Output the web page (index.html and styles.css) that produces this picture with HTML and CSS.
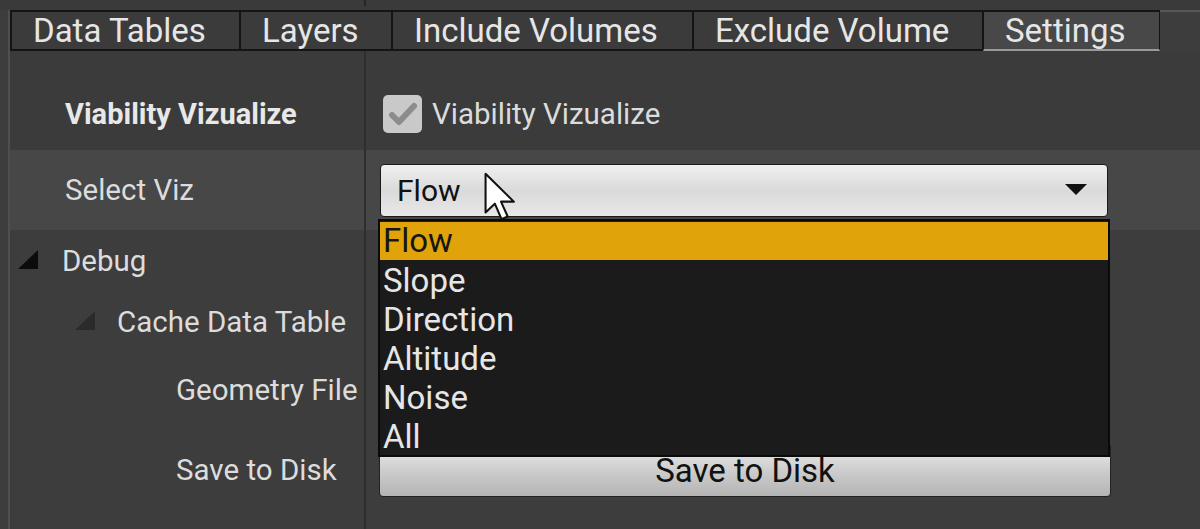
FILE: index.html
```html
<!DOCTYPE html>
<html lang="en">
  <head>
    <meta charset="UTF-8" />
    <meta name="viewport" content="width=device-width, initial-scale=1.0" />
    <title>Settings</title>
    <link rel="stylesheet" href="styles.css">
  </head>
  <body>
    <div class="top-strip"><span class="tick"></span></div>
    <div class="panel">
      <div class="tabs">
        <div class="tab" style="width: 230px">Data Tables</div>
        <div class="tab" style="width: 152px">Layers</div>
        <div class="tab" style="width: 301px">Include Volumes</div>
        <div class="tab" style="width: 290px">Exclude Volume</div>
        <div class="tab active" style="width: 177px">Settings</div>
        <div class="tab-rest"></div>
      </div>

      <div class="details">
        <div class="row first">
          <div class="name bold">Viability Vizualize</div>
          <div class="value">
            <span class="checkbox">
              <svg width="30" height="26" viewBox="0 0 30 26">
                <path d="M4 14 L11 21 L26 5" fill="none" stroke="#8c8c8c" stroke-width="6" stroke-linejoin="round" stroke-linecap="round" />
              </svg>
            </span>
            <span class="check-label">Viability Vizualize</span>
          </div>
        </div>

        <div class="row hover">
          <div class="name">Select Viz</div>
          <div class="value">
            <div class="combo">
              <span>Flow</span>
              <svg class="combo-arrow" width="22" height="12" viewBox="0 0 22 12">
                <path d="M0 0 L22 0 L11 11 Z" fill="#111" />
              </svg>
            </div>
          </div>
        </div>

        <div class="row group">
          <div class="name">
            <span class="arrow"></span>
            <span>Debug</span>
          </div>
          <div class="value"></div>
        </div>

        <div class="row sub">
          <div class="name">
            <span class="arrow dim"></span>
            <span>Cache Data Table</span>
          </div>
          <div class="value"></div>
        </div>

        <div class="row leaf geo">
          <div class="name">Geometry File</div>
          <div class="value"></div>
        </div>

        <div class="row leaf save">
          <div class="name">Save to Disk</div>
          <div class="value">
            <button class="save-btn">Save to Disk</button>
          </div>
        </div>
      </div>
    </div>

    <!-- open combo list -->
    <div class="dropdown">
      <div class="option selected">Flow</div>
      <div class="option">Slope</div>
      <div class="option">Direction</div>
      <div class="option">Altitude</div>
      <div class="option">Noise</div>
      <div class="option">All</div>
    </div>

    <svg class="cursor" width="36" height="52" viewBox="0 0 14 20">
      <path d="M1 1 L1 16 L4.6 12.6 L7.2 18.6 L9.6 17.6 L7 11.8 L12 11.8 Z" fill="#fff" stroke="#111" stroke-width="0.8" stroke-linejoin="round" />
    </svg>
  </body>
</html>
```

FILE: styles.css
```css
body {
  margin: 0;
  height: 529px;
  overflow: hidden;
  position: relative;
  font-family: Roboto, "Noto Sans", sans-serif;
  background-color: #3d3d3d;
  color: #e2e2e2;
}

.top-strip {
  height: 10px;
  background: #3a3a3a;
  position: relative;
}

.tick {
  position: absolute;
  left: 364px;
  top: 0;
  width: 2px;
  height: 6px;
  background: #262626;
}

.panel {
  margin-left: 8px;
  border-left: 2px solid #4f4f4f;
  height: 519px;
}

/* Tab strip */
.tabs {
  display: flex;
  height: 41px;
}

.tab {
  box-sizing: border-box;
  height: 41px;
  border: 2px solid #141414;
  border-left-width: 1px;
  border-right-width: 1px;
  background: #3b3b3b;
  font-size: 33px;
  padding-left: 21px;
  line-height: 37px;
  color: #e6e6e6;
  white-space: nowrap;
}

.tab:first-child {
  border-left-width: 2px;
}

.tab.active {
  background: #484848;
  border-bottom: 2px solid #9a9a9a;
}

.tab-rest {
  flex: 1;
  border-top: 2px solid #575757;
}

/* Property rows */
.details {
  display: flex;
  flex-direction: column;
}

.row {
  display: flex;
  align-items: stretch;
}

.row.first {
  height: 99px;
  background: #3b3b3b;
}

.row.first .name,
.row.first .value {
  padding-top: 26px;
}

.row.hover {
  height: 80px;
  background: #474747;
}

.row.group {
  height: 62px;
}

.row.sub {
  height: 60px;
}

.row.geo {
  height: 76px;
}

.row.save {
  height: 101px;
}

.row.save .name,
.row.save .value {
  padding-bottom: 17px;
}

.name {
  box-sizing: border-box;
  width: 356px;
  display: flex;
  align-items: center;
  padding-left: 55px;
  font-size: 29.5px;
  color: #dcdcdc;
  border-right: 2px solid #2e2e2e;
  white-space: nowrap;
}

.name.bold {
  font-weight: bold;
  font-size: 29px;
  color: #e8e8e8;
}

.value {
  box-sizing: border-box;
  flex: 1;
  display: flex;
  align-items: center;
  padding-left: 12px;
  padding-right: 89px;
}

.row.first .value {
  padding-left: 17px;
}

.group .name {
  padding-left: 8px;
}

.sub .name {
  padding-left: 65px;
}

.leaf .name {
  padding-left: 166px;
}

.arrow {
  width: 0;
  height: 0;
  border-left: 20px solid transparent;
  border-bottom: 19px solid #0c0c0c;
  margin-right: 24px;
  margin-top: -4px;
}

.arrow.dim {
  border-bottom-color: #2b2b2b;
  margin-right: 22px;
}

/* Checkbox */
.checkbox {
  width: 39px;
  height: 38px;
  border-radius: 5px;
  background: #c9c9c9;
  display: flex;
  align-items: center;
  justify-content: center;
  margin-right: 10px;
}

.check-label {
  font-size: 29.5px;
  color: #dcdcdc;
}

/* Combo box */
.combo {
  box-sizing: border-box;
  flex: 1;
  height: 53px;
  margin-left: 2px;
  margin-right: 3px;
  border: 1px solid #1a1a1a;
  border-radius: 4px;
  background: linear-gradient(#f0f0f0, #dadada 50%, #e8e8e8);
  display: flex;
  align-items: center;
  justify-content: space-between;
  padding: 0 20px 0 16px;
  font-size: 30px;
  color: #111;
}

/* Button */
.save-btn {
  box-sizing: border-box;
  flex: 1;
  height: 54px;
  margin-left: 1px;
  border: 1px solid #222;
  border-radius: 4px;
  background: linear-gradient(#ebebeb, #c8c8c8 60%, #b4b4b4);
  font-family: Roboto, "Noto Sans", sans-serif;
  font-size: 33px;
  color: #111;
  padding: 0;
}

/* Open combo list, sits over the rows */
.dropdown {
  position: absolute;
  left: 378px;
  top: 219px;
  width: 732px;
  box-sizing: border-box;
  height: 238px;
  background: #1b1b1b;
  border: 2px solid #0a0a0a;
  padding: 1px 0;
}

.option {
  height: 39px;
  line-height: 39px;
  padding-left: 3px;
  font-size: 33px;
  color: #e6e6e6;
}

.option.selected {
  background: #e0a30a;
  color: #161616;
  height: 38px;
  line-height: 38px;
  margin-bottom: 1px;
}

.cursor {
  position: absolute;
  left: 483px;
  top: 171px;
}
```
